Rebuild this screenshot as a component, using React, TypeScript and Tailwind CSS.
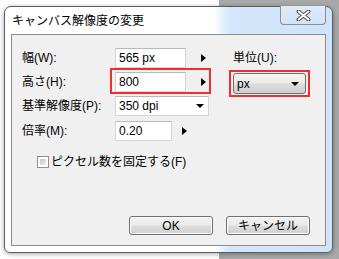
import React from 'react'

const FONT = "font-['Liberation_Sans','Noto_Sans_CJK_JP',sans-serif]"

function RightArrow() {
  return (
    <svg width="5" height="8" viewBox="0 0 5 8" className="shrink-0">
      <polygon points="0,0 5,4 0,8" fill="#000" />
    </svg>
  )
}

function DownArrow() {
  return (
    <svg width="8" height="4" viewBox="0 0 8 4" className="shrink-0">
      <polygon points="0,0 8,0 4,4" fill="#000" />
    </svg>
  )
}

function TextBox({ value, width }: { value: string; width: string }) {
  return (
    <div
      className={`${width} h-[20px] bg-white border border-[#d6d6d6] border-t-[#b9b9b9] flex items-center pl-[3px] text-[12px] text-black`}
    >
      {value}
    </div>
  )
}

function Button({ label }: { label: string }) {
  return (
    <button
      type="button"
      className="w-[84px] h-[19px] rounded-[3px] border border-[#707070] bg-[linear-gradient(180deg,#f2f2f2_0%,#ebebeb_48%,#dddddd_52%,#cfcfcf_100%)] text-[12px] leading-none text-black flex items-center justify-center shadow-[inset_0_0_0_1px_#fcfcfc]"
    >
      {label}
    </button>
  )
}

export default function App() {
  const rows = [
    { label: '幅(W):', value: '565 px', width: 'w-[71px]', arrow: true },
    { label: '高さ(H):', value: '800', width: 'w-[71px]', arrow: true, marked: true },
  ]

  return (
    <div className={`relative w-[339px] h-[259px] overflow-hidden bg-white ${FONT}`}>
      {/* window behind */}
      <div className="absolute left-[219px] top-0 right-0 bottom-0 bg-[#a9a9a9]" />

      {/* dialog */}
      <div className="absolute left-[4px] top-[6px] w-[329px] h-[247px] rounded-t-[7px] rounded-b-[6px] border border-[#5d5d5d] bg-[linear-gradient(90deg,#ffffff_0%,#ffffff_64%,#e6f6ff_66%,#d3e6fb_69%,#cfe3fb_100%)] shadow-[0_1px_5px_rgba(0,0,0,0.35)] flex flex-col">
        {/* title bar */}
        <div className="relative h-[27px] flex items-center pl-[7px] pt-[1px] text-[12px] text-black">
          キャンバス解像度の変更
          <div className="absolute top-[-1px] right-[6px] w-[46px] h-[19px] rounded-b-[4px] border border-t-0 border-[#8b8f95] bg-[linear-gradient(180deg,#dfeaf7_0%,#d3e3f6_100%)] flex items-center justify-center">
            <svg width="15" height="11" viewBox="0 0 15 11">
              <path d="M2.5 1.5 L12.5 9.5 M12.5 1.5 L2.5 9.5" stroke="#4e5258" strokeWidth="4" strokeLinecap="round" />
              <path d="M2.5 1.5 L12.5 9.5 M12.5 1.5 L2.5 9.5" stroke="#ffffff" strokeWidth="2" strokeLinecap="round" />
            </svg>
          </div>
        </div>

        {/* client panel */}
        <div className="mx-[6px] mb-[6px] flex-1 border border-[#8c8c8c] bg-[#f0f0f0] flex flex-col pt-[13px] pb-[10px] text-[12px] text-black">
          <div className="flex">
            {/* left column */}
            <div className="w-[221px] flex flex-col gap-[4px]">
              {rows.map(r => (
                <div key={r.label} className="relative h-[20px] flex items-center pl-[10px]">
                  <span className="w-[93px]">{r.label}</span>
                  <TextBox value={r.value} width={r.width} />
                  <span className="ml-[15px]"><RightArrow /></span>
                  {r.marked && (
                    <div className="absolute left-[98px] top-[-4px] w-[101px] h-[26px] border-2 border-[#ee2f2f]" />
                  )}
                </div>
              ))}
              <div className="h-[20px] flex items-center pl-[10px]">
                <span className="w-[93px]">基準解像度(P):</span>
                <div className="w-[94px] h-[20px] bg-white border border-[#d6d6d6] border-t-[#b9b9b9] flex items-center justify-between pl-[3px] pr-[4px]">
                  350 dpi
                  <DownArrow />
                </div>
              </div>
              <div className="h-[20px] mt-[1px] flex items-center pl-[10px]">
                <span className="w-[93px]">倍率(M):</span>
                <TextBox value="0.20" width="w-[57px]" />
                <span className="ml-[10px]"><RightArrow /></span>
              </div>
            </div>

            {/* right column */}
            <div className="flex flex-col">
              <div className="h-[20px] flex items-center">単位(U):</div>
              <div className="relative mt-[5px] w-[73px] h-[21px] rounded-[3px] border border-[#707070] bg-[linear-gradient(180deg,#f2f2f2_0%,#ebebeb_48%,#dddddd_52%,#cfcfcf_100%)] flex items-center justify-between pl-[3px] pr-[6px]">
                px
                <DownArrow />
                <div className="absolute left-[-5px] top-[-4px] w-[81px] h-[27px] border-2 border-[#ee2f2f]" />
              </div>
            </div>
          </div>

          {/* checkbox */}
          <div className="mt-[12px] pl-[25px] flex items-center gap-[2px]">
            <div className="w-[12px] h-[12px] border border-[#8f8f8f] bg-white p-[2px]">
              <div className="w-full h-full bg-[linear-gradient(135deg,#cbcbcb_0%,#e8e8e8_100%)]" />
            </div>
            <span>ピクセル数を固定する(F)</span>
          </div>

          {/* buttons */}
          <div className="mt-auto flex justify-end gap-[13px] pr-[15px]">
            <Button label="OK" />
            <Button label="キャンセル" />
          </div>
        </div>
      </div>
    </div>
  )
}
